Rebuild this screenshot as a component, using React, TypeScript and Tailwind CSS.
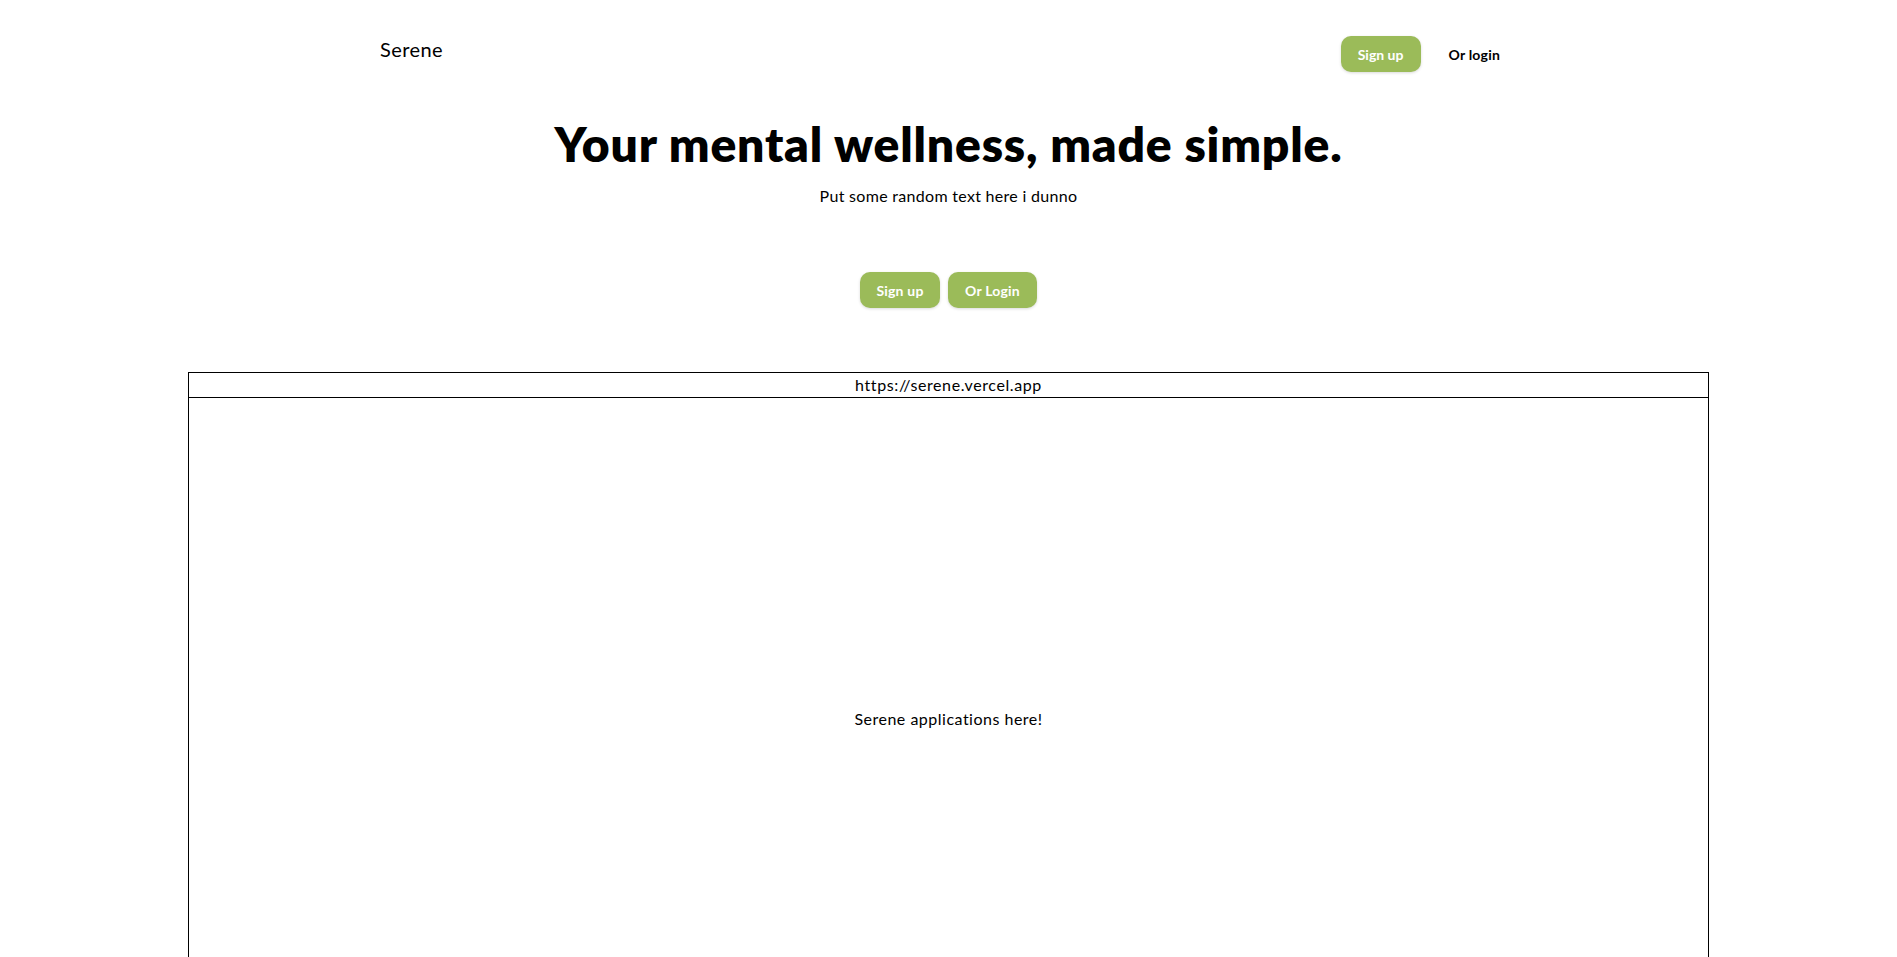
export default function App() {
  return (
    <div className="min-h-screen bg-white text-black font-['Lato','Open_Sans',sans-serif] overflow-hidden">
      {/* top nav */}
      <header className="flex justify-between items-start pl-[380px] pr-[397px] pt-[36px]">
        <span className="text-[20px] mt-[1px] leading-[24px] tracking-[0.4px]">Serene</span>
        <nav className="flex items-center gap-[28px]">
          <button className="h-[36px] w-[80px] rounded-[10px] bg-[#9bbb59] text-white text-[14px] font-bold shadow-[0_1px_3px_rgba(0,0,0,0.15)]">
            Sign up
          </button>
          <button className="text-[14px] font-bold tracking-[0.2px]">Or login</button>
        </nav>
      </header>

      {/* hero */}
      <section className="flex flex-col items-center mt-[46px]">
        <h1 className="text-[48px] leading-[52px] font-extrabold tracking-[0.8px]">
          Your mental wellness, made simple.
        </h1>
        <p className="text-[16px] mt-[14px] tracking-[0.3px]">Put some random text here i dunno</p>
        <div className="flex gap-[8px] mt-[64px]">
          <button className="h-[36px] w-[80px] rounded-[10px] bg-[#9bbb59] text-white text-[14px] font-bold tracking-[0.2px] shadow-[0_1px_3px_rgba(0,0,0,0.15)]">
            Sign up
          </button>
          <button className="h-[36px] w-[89px] rounded-[10px] bg-[#9bbb59] text-white text-[14px] font-bold tracking-[0.2px] shadow-[0_1px_3px_rgba(0,0,0,0.15)]">
            Or Login
          </button>
        </div>
      </section>

      {/* browser preview */}
      <div className="w-[1521px] mx-auto mt-[64px] border border-black border-b-0">
        <div className="h-[25px] border-b border-black flex items-center justify-center text-[16px] tracking-[0.6px]">
          https://serene.vercel.app
        </div>
        <div className="h-[641px] flex items-center justify-center text-[16px] tracking-[0.5px]">
          Serene applications here!
        </div>
      </div>
    </div>
  );
}
